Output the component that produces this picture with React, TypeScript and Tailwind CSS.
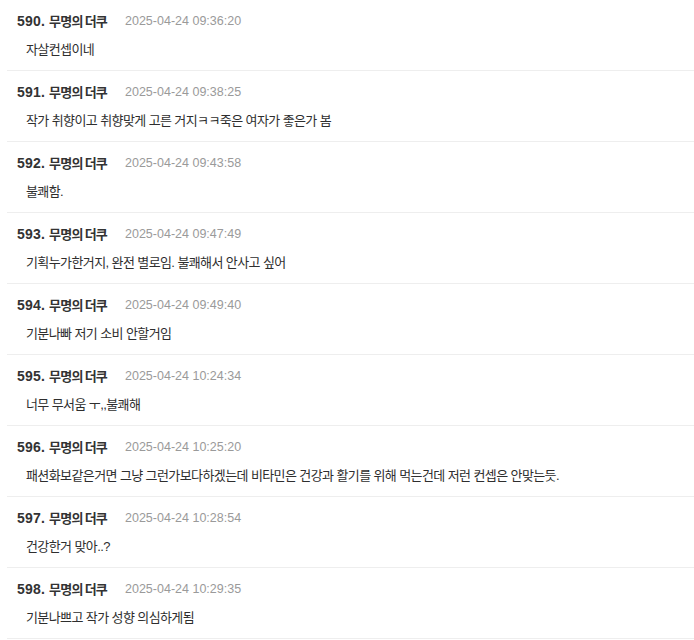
import React from "react";

const rows = [
  { n: 590, t: "2025-04-24 09:36:20", c: "자살컨셉이네" },
  { n: 591, t: "2025-04-24 09:38:25", c: "작가 취향이고 취향맞게 고른 거지ㅋㅋ죽은 여자가 좋은가 봄" },
  { n: 592, t: "2025-04-24 09:43:58", c: "불쾌함." },
  { n: 593, t: "2025-04-24 09:47:49", c: "기획누가한거지, 완전 별로임. 불쾌해서 안사고 싶어" },
  { n: 594, t: "2025-04-24 09:49:40", c: "기분나빠 저기 소비 안할거임" },
  { n: 595, t: "2025-04-24 10:24:34", c: "너무 무서움 ㅜ,,불쾌해" },
  { n: 596, t: "2025-04-24 10:25:20", c: "패션화보같은거면 그냥 그런가보다하겠는데 비타민은 건강과 활기를 위해 먹는건데 저런 컨셉은 안맞는듯." },
  { n: 597, t: "2025-04-24 10:28:54", c: "건강한거 맞아..?" },
  { n: 598, t: "2025-04-24 10:29:35", c: "기분나쁘고 작가 성향 의심하게됨" },
];

export default function App() {
  return (
    <div
      className="w-[694px] h-[640px] overflow-hidden bg-white"
      style={{ fontFamily: '"Liberation Sans", "Noto Sans CJK KR", sans-serif' }}
    >
      {rows.map((r) => (
        <div key={r.n} className="ml-[7px] border-b border-[#eeeeee] pt-[11px] pb-[10px] pl-[10px]">
          <div className="flex items-center h-[20px]">
            <span className="text-[14px] font-bold text-[#333333] tracking-[0.2px]">{r.n}.</span>
            <span
              className="text-[13px] font-bold text-[#333333] tracking-[-0.8px] ml-[4px]"
              style={{ fontFamily: '"Noto Sans CJK KR", sans-serif' }}
            >
              무명의 더쿠
            </span>
            <span className="ml-[18px] text-[12.5px] text-[#9a9a9a]">{r.t}</span>
          </div>
          <div className="mt-[9px] h-[20px] flex items-center pl-[9px] text-[13px] text-[#2e2e2e] tracking-[-0.6px] whitespace-nowrap">
            {r.c}
          </div>
        </div>
      ))}
    </div>
  );
}
